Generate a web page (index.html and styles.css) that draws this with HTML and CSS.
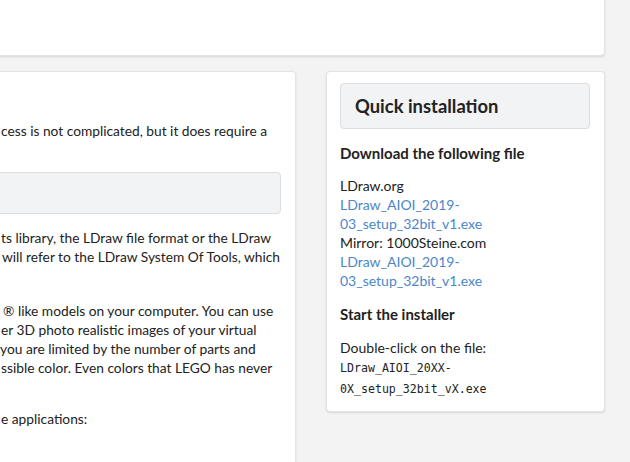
FILE: index.html
```html
<!DOCTYPE html>
<html lang="en">
<head>
<meta charset="utf-8">
<title>LDraw installation</title>
<link rel="stylesheet" href="styles.css">
</head>
<body>
<div class="page">
  <div class="card top-card"></div>
  <div class="row">
    <div class="card main-card">
      <p class="intro">cess is not complicated, but it does require a<br>&nbsp;</p>
      <div class="panel-box"></div>
      <p class="p2">ts library, the LDraw file format or the LDraw<br><span class="sh2">will refer to the LDraw System Of Tools, which</span><br>&nbsp;</p>
      <p class="p3"><span class="sh1">® like models on your computer. You can use</span><br>er 3D photo realistic images of your virtual<br><span class="shn">you are limited by the number of parts and</span><br>ssible color. Even colors that LEGO has never<br>&nbsp;</p>
      <p class="p4">e applications:</p>
    </div>
    <div class="card side-card">
      <div class="panel-box head-box"><h2>Quick installation</h2></div>
      <h4>Download the following file</h4>
      <p>LDraw.org<br><a href="#">LDraw_AIOI_2019-03_setup_32bit_v1.exe</a><br>Mirror: 1000Steine.com<br><a href="#">LDraw_AIOI_2019-03_setup_32bit_v1.exe</a></p>
      <h4>Start the installer</h4>
      <p>Double-click on the file:<br><code>LDraw_AIOI_20XX-0X_setup_32bit_vX.exe</code></p>
    </div>
  </div>
</div>
</body>
</html>
```
FILE: styles.css
```css
html, body {
  margin: 0;
  padding: 0;
  background: #f3f3f3;
  font-family: "Lato", "Liberation Sans", sans-serif;
  font-size: 14px;
  line-height: 19px;
  color: #222;
  overflow: hidden;
}
.page {
  margin-left: -14px;
  width: 619px;
}
.card {
  background: #fff;
  border: 1px solid #e3e3e3;
  border-radius: 4px;
  box-shadow: 0 1px 2px rgba(0,0,0,0.12);
  box-sizing: border-box;
}
.top-card {
  margin-top: -20px;
  height: 76px;
}
.row {
  display: grid;
  grid-template-columns: 310px 279px;
  column-gap: 30px;
  margin-top: 15px;
  align-items: start;
}
.main-card {
  padding: 49px 14px 60px 14px;
  overflow: hidden;
  white-space: nowrap;
  min-height: 420px;
  font-size: 13.75px;
}
.main-card p { margin: 0; }
.panel-box {
  background: #f2f3f5;
  border: 1px solid #dcdddf;
  border-radius: 4px;
  box-sizing: border-box;
}
.main-card .panel-box {
  height: 42px;
  margin: 13px 0 0 -20px;
}
.p2 { margin-top: 14px !important; }
.p3 { margin-top: 16px !important; }
.p4 { margin-top: 13px !important; }
.sh1 { margin-left: 2px; }
.sh2 { margin-left: 1px; }
.shn { margin-left: -1px; }

.side-card {
  padding: 11px 14px 12px 13px;
}
.head-box {
  height: 46px;
  padding: 0 14px;
  display: flex;
  align-items: center;
}
.head-box h2 {
  margin: 0;
  font-size: 18.4px;
  font-weight: 700;
  line-height: 24px;
  color: #222;
}
.side-card h4 {
  margin: 14px 0 0;
  font-size: 15px;
  font-weight: 700;
  line-height: 20px;
}
.side-card p {
  margin: 13px 0 0;
}
.side-card h4 + p { margin-top: 14px; }
.side-card h4:first-of-type + p { margin-top: 13px; }
a {
  color: #4a87c9;
  text-decoration: none;
}
code {
  font-family: "DejaVu Sans Mono", "Liberation Mono", monospace;
  font-size: 11.6px;
  color: #222;
}
```
